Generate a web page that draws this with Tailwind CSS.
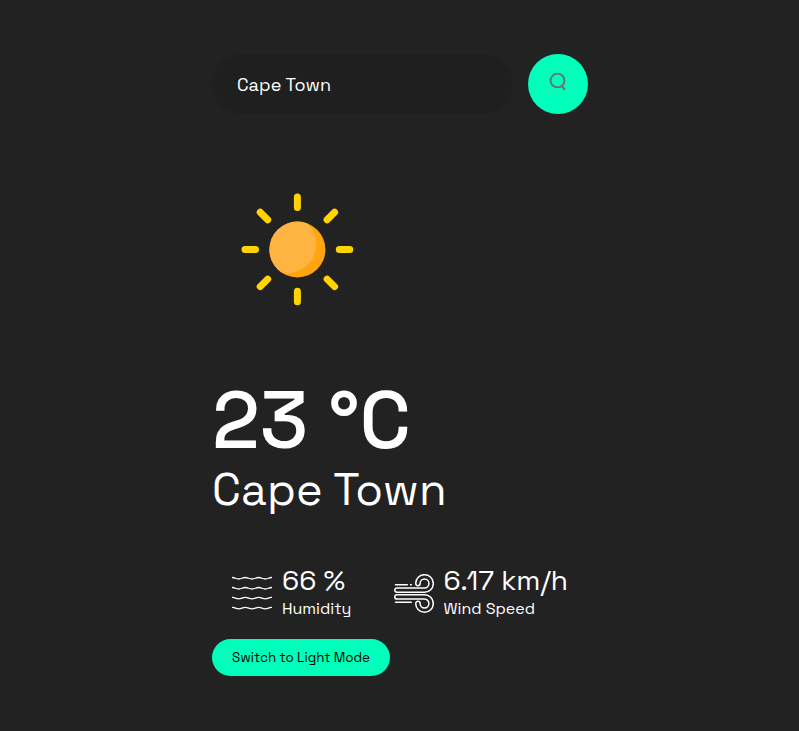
<!DOCTYPE html>
<html lang="en">
<head>
<meta charset="utf-8">
<title>Weather</title>
<script src="https://cdn.jsdelivr.net/npm/@tailwindcss/browser@4"></script>
</head>
<body class="min-h-screen overflow-hidden bg-[#222222] font-['Space_Grotesk',Roboto,sans-serif] text-white">
<main class="ml-[212px] flex w-[376px] flex-col pt-[54px]">
  <form class="flex h-[60px] items-center justify-between">
    <div class="flex h-[60px] w-[300px] items-center rounded-full bg-[#1f1f1f] pl-[25px] text-[18px] tracking-[.06px]"><span>Cape Town</span></div>
    <button type="button" aria-label="Search" class="flex size-[60px] justify-center rounded-full bg-[#00ffbb] pt-[18px]">
      <svg class="size-[18px]" viewBox="0 0 18 18" fill="none" stroke="#62736e" stroke-width="1.9"><circle cx="8.5" cy="8.5" r="6.900"/><path d="M12.500 13.700 L16 18"/></svg>
    </button>
  </form>
  <svg class="mt-[50px] h-[170px] w-[170px]" viewBox="0 0 170 170">
    <clipPath id="disc"><circle cx="85.400" cy="85.500" r="28"/></clipPath>
    <g stroke="#ffd400" stroke-width="7" stroke-linecap="round">
      <path d="M85.4 33v10.5M85.4 127.3v10.5M33 85.500h10.5M127.3 85.500h10.5M48.2 48.3l7.5 7.5M122.6 48.3l-7.5 7.5M48.2 122.6l7.5-7.5M122.6 122.6l-7.5-7.5"/>
    </g>
    <circle cx="85.400" cy="85.500" r="28" fill="#ffa50f"/>
    <circle cx="75.3" cy="80" r="29" fill="#ffb341" clip-path="url(#disc)"/>
  </svg>
  <h1 class="mt-[44px] h-[83px] whitespace-nowrap text-[80px] leading-[84px] font-medium">23 °C</h1>
  <h2 class="h-[57px] whitespace-nowrap text-[45px] leading-[57px] font-normal tracking-[.1px]">Cape Town</h2>
  <section class="mt-[48px] flex h-[55px] pl-[20px]">
    <div class="flex w-[161.5px] gap-[10px]">
      <svg class="mt-[8px] h-[40px] w-[40px] shrink-0" viewBox="0 0 40 40" fill="none" stroke="#fff" stroke-width="1.3" stroke-linecap="round">
        <path d="M.5 3.5C3 3.5 4 5 6.7 5S10.5 3.5 13.2 3.5 17.3 5 20 5s4-1.5 6.7-1.5S30.500 5 33.200 5 37 3.500 39.500 3.500"/>
        <path d="M.5 13.500C3 13.500 4 15 6.700 15S10.500 13.500 13.200 13.500 17.300 15 20 15s4-1.500 6.700-1.500S30.500 15 33.200 15 37 13.500 39.500 13.500"/>
        <path d="M.5 23.300C3 23.300 4 24.800 6.700 24.800S10.500 23.300 13.200 23.300 17.300 24.800 20 24.800s4-1.500 6.700-1.500S30.500 24.800 33.200 24.800 37 23.300 39.500 23.300"/>
        <path d="M.5 33.300C3 33.300 4 34.800 6.700 34.800S10.500 33.300 13.200 33.300 17.300 34.800 20 34.800s4-1.500 6.700-1.500S30.500 34.800 33.200 34.800 37 33.300 39.500 33.300"/>
      </svg>
      <div class="whitespace-nowrap">
        <p class="mt-[-4px] h-[37px] text-[28px] leading-[36px]">66 %</p>
        <p class="h-[20px] text-[16px] leading-[20px]">Humidity</p>
      </div>
    </div>
    <div class="flex gap-[10px]">
      <svg class="mt-[8px] h-[40px] w-[40px] shrink-0" viewBox="0 0 40 40" fill="none" stroke="#fff" stroke-width="1.5" stroke-linecap="round" stroke-linejoin="round">
        <path d="M1.500 10.700h11.800M16.500 10.700h.8M1.500 28.300h15.800"/>
        <path d="M30.500 18.300H3a2.200 2.200 0 0 1 0-4.400H30.500a4.400 4.400 0 1 0-4.400-4.400a2.200 2.200 0 0 1-4.400 0a8.800 8.800 0 1 1 8.800 8.800Z"/>
        <path d="M30.500 20.700H3a2.200 2.200 0 0 0 0 4.400H30.500a4.400 4.400 0 1 1-4.400 4.400a2.200 2.200 0 0 0-4.400 0a8.800 8.800 0 1 0 8.800-8.800Z"/>
      </svg>
      <div class="whitespace-nowrap">
        <p class="mt-[-4px] h-[37px] text-[28px] leading-[36px]">6.17 km/h</p>
        <p class="h-[20px] text-[16px] leading-[20px]">Wind Speed</p>
      </div>
    </div>
  </section>
  <button type="button" class="mt-[18px] flex h-[37px] w-[178px] items-center rounded-full bg-[#00ffbb] pl-[20px] text-[13.333px] whitespace-nowrap text-black">Switch to Light Mode</button>
</main>
</body>
</html>
